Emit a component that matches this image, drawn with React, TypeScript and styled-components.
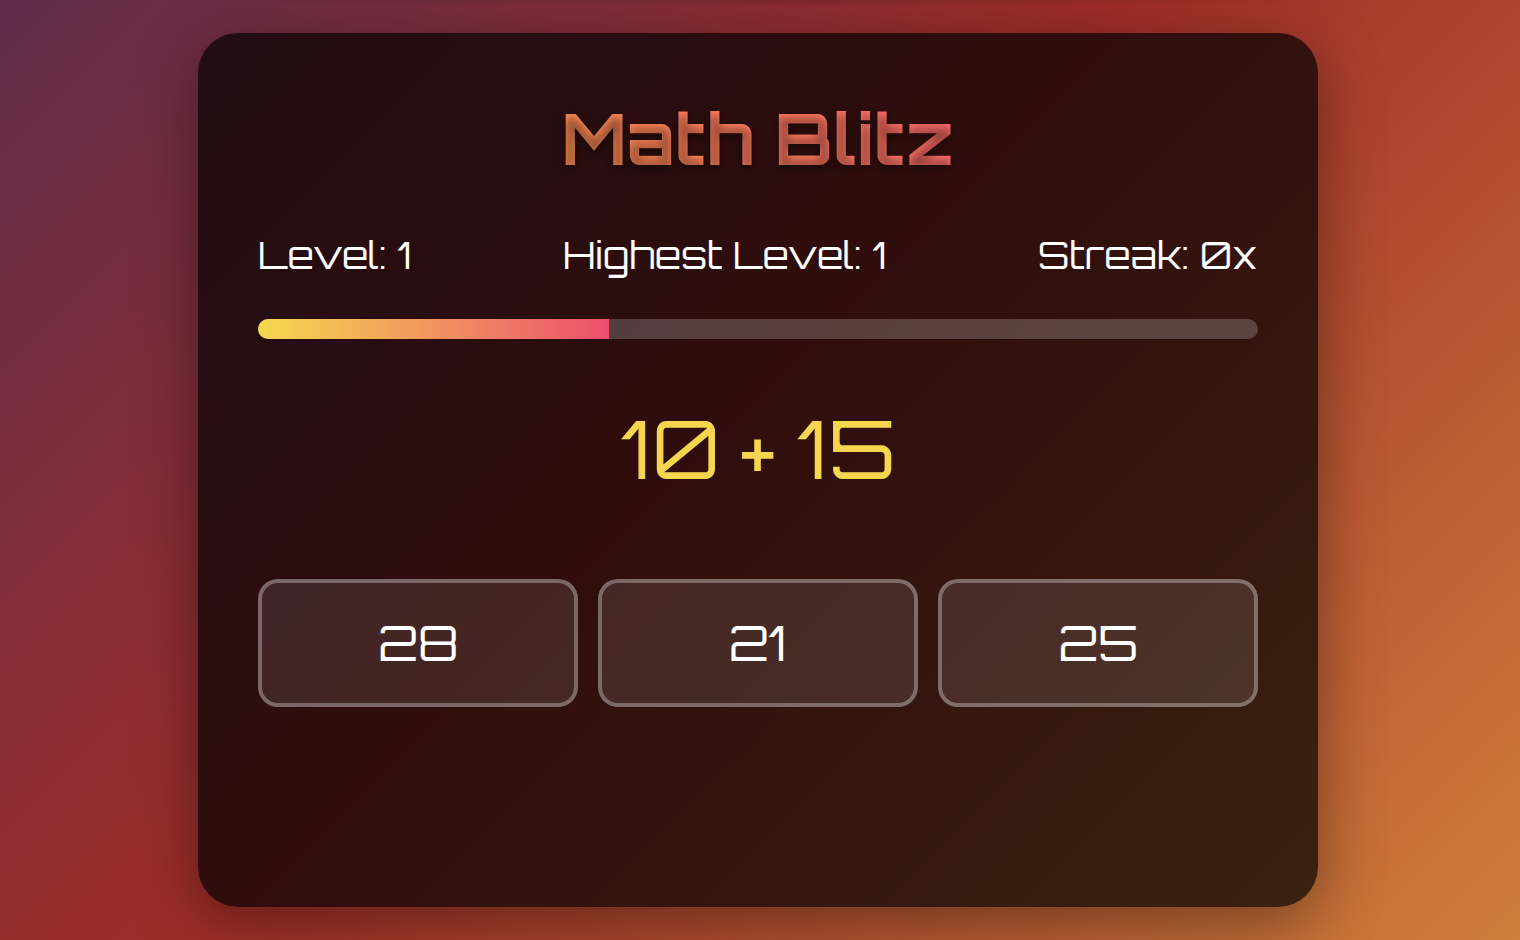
import React from 'react';
import styled, { createGlobalStyle } from 'styled-components';

const GlobalStyle = createGlobalStyle`
  * { box-sizing: border-box; }
  body {
    margin: 0;
    color: #fff;
    font-family: "Orbitron", "DejaVu Sans", sans-serif;
    font-weight: 450;
    background: #9f2d28;
  }
`;

const Page = styled.div`
  display: flex;
  flex-direction: column;
  align-items: center;
  min-height: 100vh;
  padding: 0 4px 33px 0;
  background: linear-gradient(135deg, #602d4b 0%, #9f2d28 46%, #cf7e3b 100%);
`;

const TopShade = styled.div`
  width: 82%;
  height: 6px;
  margin-bottom: 27px;
  background: radial-gradient(ellipse 50% 100% at top, rgba(0, 0, 0, 0.14), transparent);
`;

const Card = styled.main`
  display: flex;
  flex-direction: column;
  width: calc(100% - 40px);
  max-width: 1120px;
  padding: 60px;
  border-radius: 40px;
  background: rgba(0, 0, 0, 0.7);
  box-shadow: 0 16px 64px rgba(0, 0, 0, 0.4);
`;

const Title = styled.h1`
  margin: 0 0 46px;
  font-size: 70px;
  line-height: 90px;
  font-weight: 750;
  text-align: center;
  color: transparent;
  background: linear-gradient(45deg, #ffa83c, #ff5080);
  background-clip: text;
  -webkit-background-clip: text;
  text-shadow: 0 4px 8px rgba(0, 0, 0, 0.4);
`;

const Stats = styled.div`
  display: flex;
  flex-wrap: wrap;
  justify-content: space-between;
  margin-bottom: 38px;
  font-size: 38px;
  line-height: 52px;
`;

const Track = styled.div`
  height: 20px;
  margin-bottom: 60px;
  border-radius: 10px;
  overflow: hidden;
  background: rgba(255, 255, 255, 0.2);
`;

const Fill = styled.div`
  height: 100%;
  background: linear-gradient(90deg, #f5d94f, #ec4f6e);
`;

const Question = styled.p`
  margin: 0 0 82px;
  color: #f5d64e;
  font-size: 80px;
  line-height: 98px;
  text-align: center;
`;

const Answers = styled.div`
  display: grid;
  grid-template-columns: repeat(3, 1fr);
  gap: 20px;
`;

const Answer = styled.button`
  height: 128px;
  padding: 0;
  border: 4px solid rgba(255, 255, 255, 0.3);
  border-radius: 20px;
  background: rgba(255, 255, 255, 0.1);
  color: #fff;
  font-family: inherit;
  font-size: 48px;
  font-weight: inherit;
  line-height: 60px;
  cursor: pointer;
`;

const Feedback = styled.div`
  min-height: 140px;
`;

const stats = ['Level: 1', 'Highest Level: 1', 'Streak: 0x'];
const answers = [28, 21, 25];
const timeLeft = 35.1;

export default function App() {
  return (
    <Page>
      <GlobalStyle />
      <TopShade />
      <Card>
        <Title>Math Blitz</Title>
        <Stats>
          {stats.map((text) => (
            <div key={text}>{text}</div>
          ))}
        </Stats>
        <Track>
          <Fill style={{ width: `${timeLeft}%` }} />
        </Track>
        <Question>10 + 15</Question>
        <Answers>
          {answers.map((a) => (
            <Answer key={a} type="button">{a}</Answer>
          ))}
        </Answers>
        <Feedback aria-live="polite" />
      </Card>
    </Page>
  );
}
